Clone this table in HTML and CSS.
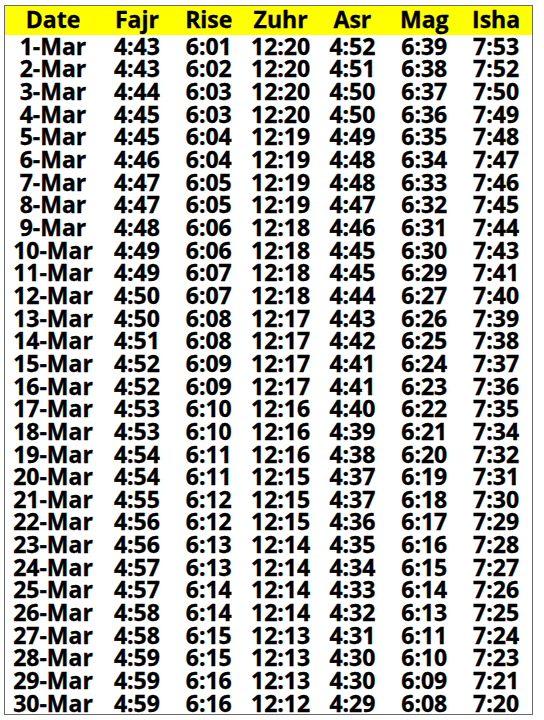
FILE: index.html
```html
<!DOCTYPE html>
<html>
<head>
<meta charset="utf-8">
<link rel="stylesheet" href="styles.css">
</head>
<body>
<div class="page">
  <div class="sheet">
    <div class="row head"><div>Date</div><div>Fajr</div><div>Rise</div><div>Zuhr</div><div>Asr</div><div>Mag</div><div>Isha</div></div>
    <div class="row"><div>1-Mar</div><div>4:43</div><div>6:01</div><div>12:20</div><div>4:52</div><div>6:39</div><div>7:53</div></div>
    <div class="row"><div>2-Mar</div><div>4:43</div><div>6:02</div><div>12:20</div><div>4:51</div><div>6:38</div><div>7:52</div></div>
    <div class="row"><div>3-Mar</div><div>4:44</div><div>6:03</div><div>12:20</div><div>4:50</div><div>6:37</div><div>7:50</div></div>
    <div class="row"><div>4-Mar</div><div>4:45</div><div>6:03</div><div>12:20</div><div>4:50</div><div>6:36</div><div>7:49</div></div>
    <div class="row"><div>5-Mar</div><div>4:45</div><div>6:04</div><div>12:19</div><div>4:49</div><div>6:35</div><div>7:48</div></div>
    <div class="row"><div>6-Mar</div><div>4:46</div><div>6:04</div><div>12:19</div><div>4:48</div><div>6:34</div><div>7:47</div></div>
    <div class="row"><div>7-Mar</div><div>4:47</div><div>6:05</div><div>12:19</div><div>4:48</div><div>6:33</div><div>7:46</div></div>
    <div class="row"><div>8-Mar</div><div>4:47</div><div>6:05</div><div>12:19</div><div>4:47</div><div>6:32</div><div>7:45</div></div>
    <div class="row"><div>9-Mar</div><div>4:48</div><div>6:06</div><div>12:18</div><div>4:46</div><div>6:31</div><div>7:44</div></div>
    <div class="row"><div>10-Mar</div><div>4:49</div><div>6:06</div><div>12:18</div><div>4:45</div><div>6:30</div><div>7:43</div></div>
    <div class="row"><div>11-Mar</div><div>4:49</div><div>6:07</div><div>12:18</div><div>4:45</div><div>6:29</div><div>7:41</div></div>
    <div class="row"><div>12-Mar</div><div>4:50</div><div>6:07</div><div>12:18</div><div>4:44</div><div>6:27</div><div>7:40</div></div>
    <div class="row"><div>13-Mar</div><div>4:50</div><div>6:08</div><div>12:17</div><div>4:43</div><div>6:26</div><div>7:39</div></div>
    <div class="row"><div>14-Mar</div><div>4:51</div><div>6:08</div><div>12:17</div><div>4:42</div><div>6:25</div><div>7:38</div></div>
    <div class="row"><div>15-Mar</div><div>4:52</div><div>6:09</div><div>12:17</div><div>4:41</div><div>6:24</div><div>7:37</div></div>
    <div class="row"><div>16-Mar</div><div>4:52</div><div>6:09</div><div>12:17</div><div>4:41</div><div>6:23</div><div>7:36</div></div>
    <div class="row"><div>17-Mar</div><div>4:53</div><div>6:10</div><div>12:16</div><div>4:40</div><div>6:22</div><div>7:35</div></div>
    <div class="row"><div>18-Mar</div><div>4:53</div><div>6:10</div><div>12:16</div><div>4:39</div><div>6:21</div><div>7:34</div></div>
    <div class="row"><div>19-Mar</div><div>4:54</div><div>6:11</div><div>12:16</div><div>4:38</div><div>6:20</div><div>7:32</div></div>
    <div class="row"><div>20-Mar</div><div>4:54</div><div>6:11</div><div>12:15</div><div>4:37</div><div>6:19</div><div>7:31</div></div>
    <div class="row"><div>21-Mar</div><div>4:55</div><div>6:12</div><div>12:15</div><div>4:37</div><div>6:18</div><div>7:30</div></div>
    <div class="row"><div>22-Mar</div><div>4:56</div><div>6:12</div><div>12:15</div><div>4:36</div><div>6:17</div><div>7:29</div></div>
    <div class="row"><div>23-Mar</div><div>4:56</div><div>6:13</div><div>12:14</div><div>4:35</div><div>6:16</div><div>7:28</div></div>
    <div class="row"><div>24-Mar</div><div>4:57</div><div>6:13</div><div>12:14</div><div>4:34</div><div>6:15</div><div>7:27</div></div>
    <div class="row"><div>25-Mar</div><div>4:57</div><div>6:14</div><div>12:14</div><div>4:33</div><div>6:14</div><div>7:26</div></div>
    <div class="row"><div>26-Mar</div><div>4:58</div><div>6:14</div><div>12:14</div><div>4:32</div><div>6:13</div><div>7:25</div></div>
    <div class="row"><div>27-Mar</div><div>4:58</div><div>6:15</div><div>12:13</div><div>4:31</div><div>6:11</div><div>7:24</div></div>
    <div class="row"><div>28-Mar</div><div>4:59</div><div>6:15</div><div>12:13</div><div>4:30</div><div>6:10</div><div>7:23</div></div>
    <div class="row"><div>29-Mar</div><div>4:59</div><div>6:16</div><div>12:13</div><div>4:30</div><div>6:09</div><div>7:21</div></div>
    <div class="row"><div>30-Mar</div><div>4:59</div><div>6:16</div><div>12:12</div><div>4:29</div><div>6:08</div><div>7:20</div></div>
  </div>
</div>
</body>
</html>
```

FILE: styles.css
```css
html, body {
  margin: 0;
  padding: 0;
  background: #ffffff;
}

.page {
  padding: 5px 11px 4px 4px;
}

.sheet {
  width: 529px;
  box-sizing: border-box;
  border: 1px solid #6a6a6a;
  font-family: "Open Sans", "Liberation Sans", sans-serif;
  font-weight: 700;
  font-size: 23px;
  color: #000000;
  -webkit-text-stroke: 0.35px #000000;
}

.row {
  display: grid;
  grid-template-columns: 96px repeat(6, 1fr);
  height: 22.67px;
  line-height: 22.67px;
  text-align: center;
  white-space: nowrap;
}

.head {
  height: 28.7px;
  line-height: 26px;
  padding-bottom: 2.7px;
  box-sizing: border-box;
  background: #ffff00;
}
```
